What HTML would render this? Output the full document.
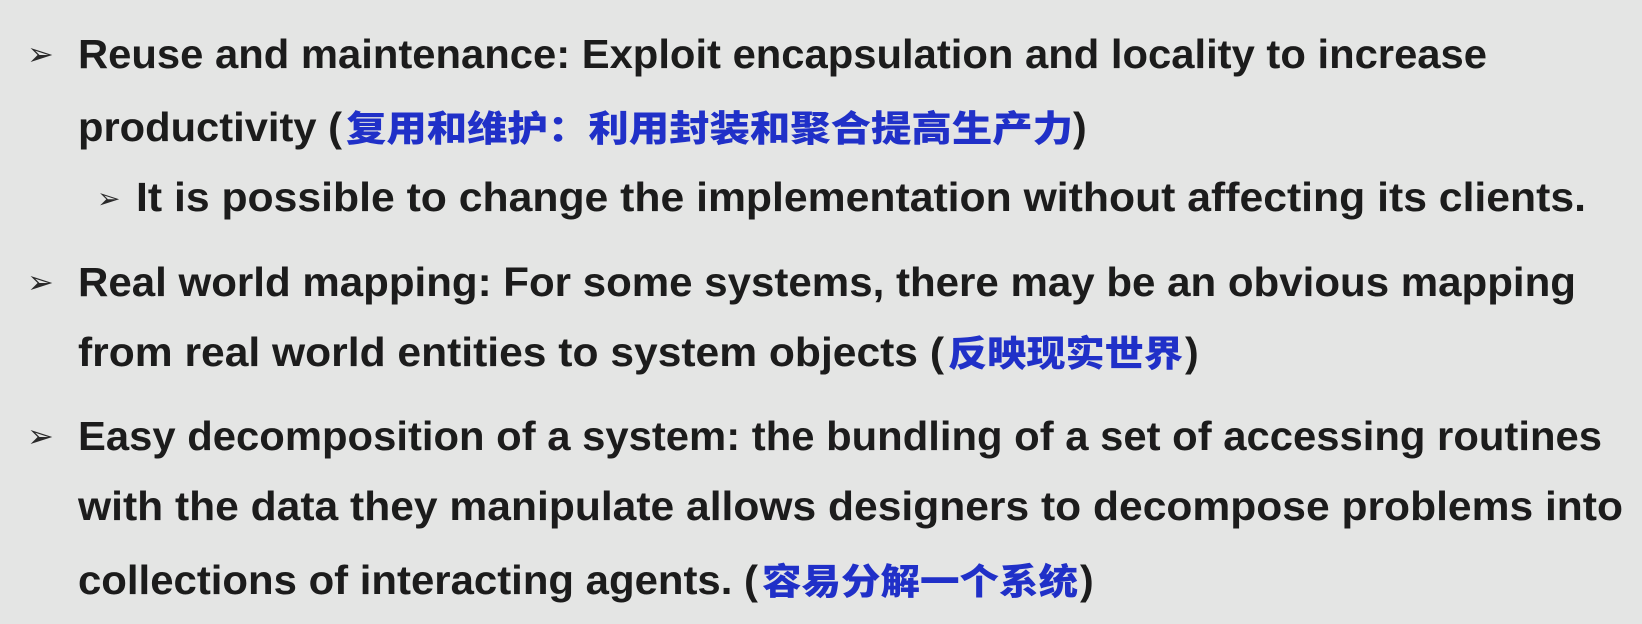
<!DOCTYPE html>
<html><head><meta charset="utf-8"><style>
html,body{margin:0;padding:0;background:#e4e5e4;}
svg{display:block}
text{font-family:"Liberation Sans","Noto Sans CJK SC",sans-serif;font-weight:bold;font-size:41px;fill:#1c1c1c}
.c{fill:#2030c8;font-family:"Noto Sans CJK SC",sans-serif;font-weight:900;font-size:36px}
.b{font-family:"DejaVu Sans",sans-serif;font-weight:bold;font-size:32px;fill:#2a2a2a}
</style></head><body>
<svg width="1642" height="624" viewBox="0 0 1642 624" xmlns="http://www.w3.org/2000/svg">
<rect width="1642" height="624" fill="#e4e5e4"/>
<text class="b" x="27" y="65">➢</text>
<text x="78" y="68" textLength="1409" lengthAdjust="spacingAndGlyphs">Reuse and maintenance: Exploit encapsulation and locality to increase</text>
<text x="78" y="141" textLength="264" lengthAdjust="spacingAndGlyphs">productivity (</text>
<text class="c" x="346" y="141" textLength="727" lengthAdjust="spacingAndGlyphs">复用和维护：利用封装和聚合提高生产力</text>
<text x="1073" y="141">)</text>
<text class="b" x="97" y="208" style="font-size:28px">➢</text>
<text x="136" y="211" textLength="1450" lengthAdjust="spacingAndGlyphs">It is possible to change the implementation without affecting its clients.</text>
<text class="b" x="27" y="293">➢</text>
<text x="78" y="296" textLength="1498" lengthAdjust="spacingAndGlyphs">Real world mapping: For some systems, there may be an obvious mapping</text>
<text x="78" y="366" textLength="866" lengthAdjust="spacingAndGlyphs">from real world entities to system objects (</text>
<text class="c" x="948" y="366" textLength="235" lengthAdjust="spacingAndGlyphs">反映现实世界</text>
<text x="1185" y="366">)</text>
<text class="b" x="27" y="447">➢</text>
<text x="78" y="450" textLength="1524" lengthAdjust="spacingAndGlyphs">Easy decomposition of a system: the bundling of a set of accessing routines</text>
<text x="78" y="520" textLength="1545" lengthAdjust="spacingAndGlyphs">with the data they manipulate allows designers to decompose problems into</text>
<text x="78" y="594" textLength="680" lengthAdjust="spacingAndGlyphs">collections of interacting agents. (</text>
<text class="c" x="762" y="594" textLength="316" lengthAdjust="spacingAndGlyphs">容易分解一个系统</text>
<text x="1080" y="594">)</text>
</svg>
</body></html>
